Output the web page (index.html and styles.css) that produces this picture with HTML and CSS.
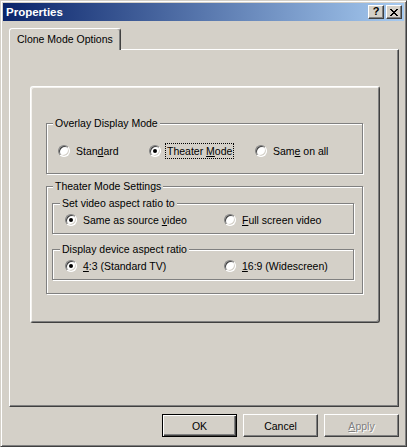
FILE: index.html
```html
<!DOCTYPE html>
<html>
<head>
<meta charset="utf-8">
<title>Properties</title>
<link rel="stylesheet" href="styles.css">
</head>
<body>
<div class="window">
  <div class="titlebar">
    <span class="title">Properties</span>
    <span class="cap-btn help">?</span>
    <span class="cap-btn close"><svg width="8" height="7" viewBox="0 0 8 7"><path d="M0 0h2v1h-2zM6 0h2v1h-2zM1 1h2v1h-2zM5 1h2v1h-2zM2 2h4v1h-4zM3 3h2v1h-2zM2 4h4v1h-4zM1 5h2v1h-2zM5 5h2v1h-2zM0 6h2v1h-2zM6 6h2v1h-2z" fill="#000"/></svg></span>
  </div>
  <div class="client">
    <div class="tabs"><div class="tab">Clone Mode Options</div></div>
    <div class="tabpanel">
      <div class="inner">
        <div class="group g1">
          <div class="gtitle">Overlay Display Mode</div>
          <div class="row row3">
            <label class="opt"><span class="radio"></span><span class="lbl">Stan<u>d</u>ard</span></label>
            <label class="opt"><span class="radio on"></span><span class="lbl focus">Theater <u>M</u>ode</span></label>
            <label class="opt"><span class="radio"></span><span class="lbl">Sam<u>e</u> on all</span></label>
          </div>
        </div>
        <div class="group g2">
          <div class="gtitle">Theater Mode Settings</div>
          <div class="group sub s1">
            <div class="gtitle stitle">Set video aspect ratio to</div>
            <div class="row row2">
              <label class="opt"><span class="radio on"></span><span class="lbl">Same as source <u>v</u>ideo</span></label>
              <label class="opt"><span class="radio"></span><span class="lbl"><u>F</u>ull screen video</span></label>
            </div>
          </div>
          <div class="group sub s2">
            <div class="gtitle stitle">Display device aspect ratio</div>
            <div class="row row2">
              <label class="opt"><span class="radio on"></span><span class="lbl"><u>4</u>:3 (Standard TV)</span></label>
              <label class="opt"><span class="radio"></span><span class="lbl"><u>1</u>6:9 (Widescreen)</span></label>
            </div>
          </div>
        </div>
      </div>
    </div>
    <div class="buttons">
      <div class="btn default">OK</div>
      <div class="btn">Cancel</div>
      <div class="btn disabled"><span><u>A</u>pply</span></div>
    </div>
  </div>
</div>
</body>
</html>
```
FILE: styles.css
```css
html, body {
  margin: 0;
  padding: 0;
  background: #D4D0C8;
}
body {
  font-family: "Liberation Sans", Arial, sans-serif;
  font-size: 10.5px;
  color: #000;
}
.window {
  width: 407px;
  height: 447px;
  box-sizing: border-box;
  border: 1px solid;
  border-color: #D4D0C8 #404040 #404040 #D4D0C8;
  box-shadow: inset 1px 1px 0 #FFFFFF, inset -1px -1px 0 #808080;
  padding: 2px;
  background: #D4D0C8;
}
.titlebar {
  height: 18px;
  display: flex;
  align-items: center;
  padding: 0 2px 0 3px;
  background: linear-gradient(to right, #0A246A, #A6CAF0);
}
.title {
  flex: 1;
  color: #fff;
  font-weight: bold;
  font-size: 11.5px;
  line-height: 14px;
}
.cap-btn {
  width: 16px;
  height: 14px;
  box-sizing: border-box;
  background: #D4D0C8;
  border: 1px solid;
  border-color: #FFFFFF #404040 #404040 #FFFFFF;
  box-shadow: inset -1px -1px 0 #808080;
  display: flex;
  align-items: center;
  justify-content: center;
}
.help {
  margin-right: 2px;
  font-weight: bold;
  font-size: 11px;
  line-height: 11px;
  padding-bottom: 1px;
}
.close svg {
  display: block;
}
.client {
  padding: 7px 5px 0 6px;
}
.tabs {
  display: flex;
}
.tab {
  position: relative;
  z-index: 1;
  width: 112px;
  height: 22px;
  box-sizing: border-box;
  margin-bottom: -1px;
  border: 1px solid;
  border-bottom: none;
  border-color: #FFFFFF #404040 transparent #FFFFFF;
  border-radius: 3px 3px 0 0;
  box-shadow: inset -1px 0 0 #808080;
  background: #D4D0C8;
  padding: 3px 0 0 7px;
  line-height: 14px;
  white-space: nowrap;
}
.tabpanel {
  height: 358px;
  box-sizing: border-box;
  border: 1px solid;
  border-color: #FFFFFF #404040 #404040 #FFFFFF;
  box-shadow: inset -1px -1px 0 #808080;
  padding: 36px 0 0 20px;
}
.inner {
  width: 350px;
  height: 237px;
  box-sizing: border-box;
  border: 1px solid;
  border-color: #FFFFFF #404040 #404040 #FFFFFF;
  border-radius: 3px;
  box-shadow: inset 1px 1px 0 #F4F2EE, inset -1px -1px 0 #808080;
  padding: 36px 0 0 15px;
}
.group {
  border: 1px solid #808080;
  box-shadow: inset 1px 1px 0 #FFFFFF, 1px 1px 0 #FFFFFF;
  box-sizing: border-box;
}
.g1 {
  width: 317px;
  padding-bottom: 14px;
}
.g2 {
  width: 317px;
  margin-top: 12px;
  padding-bottom: 13px;
}
.gtitle {
  width: fit-content;
  margin: -7px 0 0 6px;
  padding: 0 2px;
  line-height: 13px;
  background: #D4D0C8;
  white-space: nowrap;
}
.stitle {
  margin-left: 7px;
}
.sub {
  width: 302px;
  margin-left: 5px;
  padding-bottom: 5px;
}
.s1 {
  margin-top: 10px;
}
.s2 {
  margin-top: 15px;
}
.row {
  display: grid;
}
.row3 {
  grid-template-columns: 91px 106px auto;
  margin-top: 13px;
  padding-left: 11px;
}
.row2 {
  grid-template-columns: 159px auto;
  margin-top: 2px;
  padding-left: 12px;
}
.opt {
  display: flex;
  align-items: center;
  height: 16px;
}
.radio {
  position: relative;
  flex: none;
  width: 12px;
  height: 12px;
  box-sizing: border-box;
  margin-right: 4px;
  border-radius: 50%;
  background: #FFFFFF;
  border: 1px solid;
  border-color: #808080 #FFFFFF #FFFFFF #808080;
  box-shadow: inset 1px 1px 0 #404040, inset -1px -1px 0 #D4D0C8;
}
.radio.on::after {
  content: "";
  position: absolute;
  left: 3px;
  top: 3px;
  width: 4px;
  height: 4px;
  border-radius: 50%;
  background: #000;
}
.lbl {
  border: 1px solid transparent;
  padding: 0 1px;
  line-height: 14px;
  white-space: nowrap;
}
.lbl.focus {
  border: 1px dotted #000;
}
.buttons {
  display: flex;
  justify-content: flex-end;
  gap: 6px;
  margin-top: 7px;
}
.btn {
  width: 75px;
  height: 23px;
  box-sizing: border-box;
  border: 1px solid;
  border-color: #FFFFFF #404040 #404040 #FFFFFF;
  box-shadow: inset -1px -1px 0 #808080;
  display: flex;
  align-items: center;
  justify-content: center;
  line-height: 14px;
}
.btn.default {
  border-color: #000;
  box-shadow: inset 1px 1px 0 #FFFFFF, inset -1px -1px 0 #404040, inset -2px -2px 0 #808080;
}
.btn.disabled {
  color: #808080;
  text-shadow: 1px 1px 0 #FFFFFF;
}
```
